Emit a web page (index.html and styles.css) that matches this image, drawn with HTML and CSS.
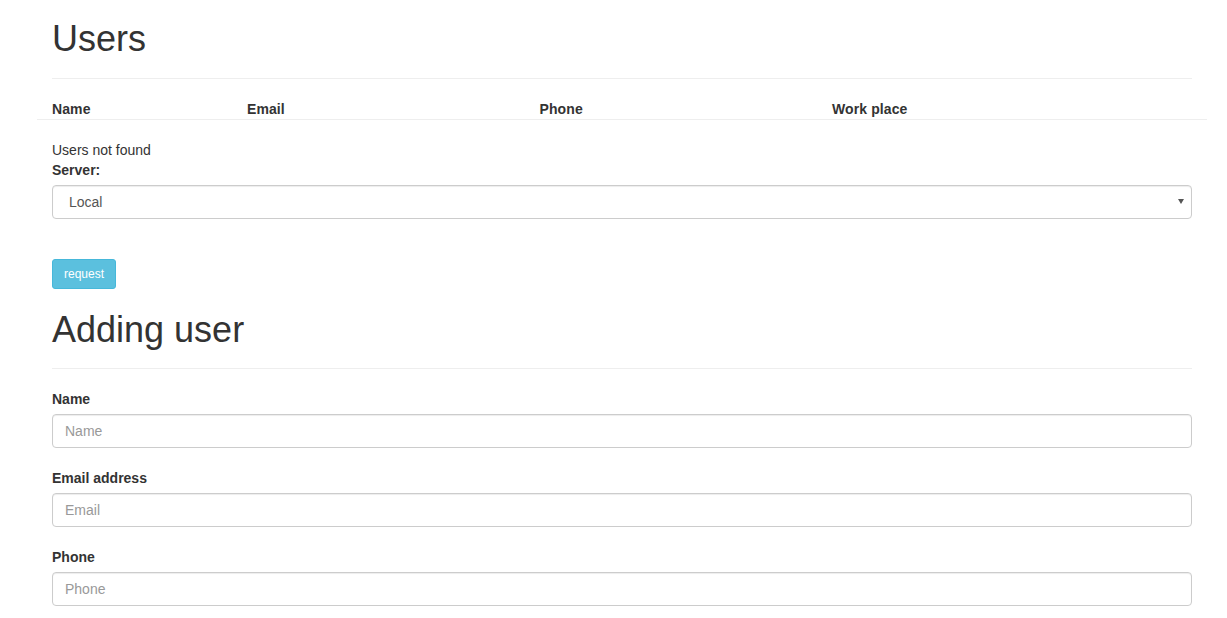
FILE: index.html
```html
<!DOCTYPE html>
<html lang="en">
<head>
<meta charset="utf-8">
<title>Users</title>
<link rel="stylesheet" href="styles.css">
</head>
<body>
<div class="page">
  <div class="container">
    <div class="page-header first"><h1>Users</h1></div>

    <div class="table-head">
      <div class="th">Name</div>
      <div class="th">Email</div>
      <div class="th">Phone</div>
      <div class="th">Work place</div>
    </div>

    <p class="empty">Users not found</p>

    <form class="server-form">
      <div class="form-group server-group">
        <label class="label" for="server">Server:</label>
        <div class="select-wrap">
          <select id="server" class="form-control select"><option>Local</option></select>
        </div>
      </div>
      <button type="button" class="btn btn-info">request</button>
    </form>

    <div class="page-header second"><h1>Adding user</h1></div>

    <form class="add-form">
      <div class="form-group">
        <label class="label" for="name">Name</label>
        <input id="name" class="form-control" type="text" placeholder="Name">
      </div>
      <div class="form-group">
        <label class="label" for="email">Email address</label>
        <input id="email" class="form-control" type="email" placeholder="Email">
      </div>
      <div class="form-group last">
        <label class="label" for="phone">Phone</label>
        <input id="phone" class="form-control" type="text" placeholder="Phone">
      </div>
    </form>
  </div>
</div>
</body>
</html>
```

FILE: styles.css
```css
* { box-sizing: border-box; }

html, body {
  margin: 0;
  padding: 0;
  background: #fff;
}

body {
  font-family: "Liberation Sans", Arial, Helvetica, sans-serif;
  font-size: 14px;
  line-height: 20px;
  color: #333;
}

.page {
  padding: 0 20px 0 37px;
}

.container {
  width: 1170px;
  padding: 0 15px;
}

.page-header {
  padding-bottom: 9px;
  margin: 0 0 20px;
  border-bottom: 1px solid #eee;
}

.page-header h1 {
  margin: 20px 0 10px;
  font-size: 36px;
  line-height: 1.1;
  font-weight: 500;
  color: #333;
}

.page-header.first h1 {
  margin-top: 19px;
}

.page-header.second h1 {
  margin-top: 21px;
}

.table-head {
  display: grid;
  grid-template-columns: 195px 292.5px 292.5px 390px;
  margin: 0 -15px 20px;
  border-bottom: 1px solid #eee;
}

.th {
  padding: 0 15px;
  font-weight: bold;
  line-height: 20px;
  letter-spacing: 0.1px;
}

.empty {
  margin: 0;
}

.form-group {
  margin-bottom: 20px;
}

.server-group {
  margin-bottom: 40px;
}

.form-group.last {
  margin-bottom: 0;
}

.label {
  display: block;
  font-weight: bold;
  margin-bottom: 5px;
}

.form-control {
  display: block;
  width: 100%;
  height: 34px;
  padding: 6px 12px;
  font-family: inherit;
  font-size: 14px;
  line-height: 20px;
  color: #555;
  background: #fff;
  border: 1px solid #ccc;
  border-radius: 4px;
  box-shadow: inset 0 1px 1px rgba(0, 0, 0, 0.075);
  outline: none;
}

.form-control::placeholder {
  color: #999;
}

.select-wrap {
  position: relative;
}

.select {
  -webkit-appearance: none;
  appearance: none;
  padding-left: 16px;
}

.select-wrap::after {
  content: "";
  position: absolute;
  right: 8px;
  top: 14px;
  width: 0;
  height: 0;
  border-left: 3px solid transparent;
  border-right: 3px solid transparent;
  border-top: 5px solid #555;
  pointer-events: none;
}

.btn {
  display: inline-block;
  height: 30px;
  padding: 5px 11px;
  font-family: inherit;
  font-size: 12px;
  line-height: 18px;
  border-radius: 3px;
  border: 1px solid transparent;
  cursor: pointer;
}

.btn-info {
  color: #fff;
  background: #5bc0de;
  border-color: #46b8da;
}
```
